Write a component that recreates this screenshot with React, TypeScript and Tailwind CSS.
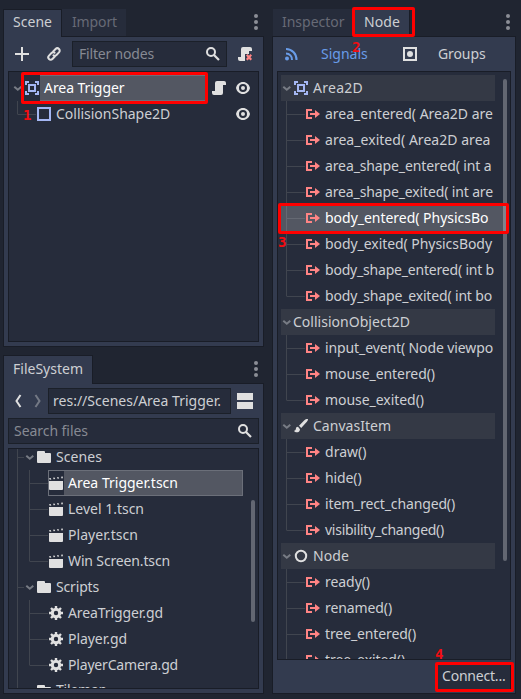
import { useLayoutEffect, useRef, useState, type ReactNode } from "react";

type IconProps = { children: ReactNode; className?: string };

function Icon({ children, className = "text-[#e0e0e0]" }: IconProps) {
  return (
    <svg width="16" height="16" viewBox="0 0 16 16" fill="currentColor" className={`block shrink-0 ${className}`}>
      {children}
    </svg>
  );
}

const AreaIcon = () => (
  <Icon className="text-[#a5b7f3]">
    <path d="M1 1v4h2V3h2V1zM11 1v2h2v2h2V1zM4 4v8h8V4zm2 2h4v4H6zM1 11v4h4v-2H3v-2zM13 11v2h-2v2h4v-4z" />
  </Icon>
);
const ShapeIcon = () => (
  <Icon className="text-[#a5b7f3]">
    <path d="M1 1v14h14V1zm2 2h10v10H3z" />
  </Icon>
);
const SignalIcon = () => (
  <Icon className="text-[#ff8484]">
    <path d="M1 3v10h6v-2H3V5h4V3zM10 4v3H5v2h5v3l5-4z" />
  </Icon>
);
const ScriptIcon = ({ detach = false }: { detach?: boolean }) => (
  <Icon>
    {detach ? (
      <>
        <path d="M6 1a2 2 0 0 0-2 2v8H1v2a2 2 0 0 0 2 2h5V8h4V5h3V3a2 2 0 0 0-2-2z" />
        <path d="M9 9.500 10.500 8 12 9.700 13.500 8 15 9.500 13.500 11.300 15 13l-1.500 1.500L12 13l-1.500 1.500L9 13l1.500-1.700z" fill="#ff8484" />
      </>
    ) : (
      <path d="M6 1a2 2 0 0 0-2 2v8H1v2a2 2 0 0 0 2 2h7a2 2 0 0 0 2-2V5h3V3a2 2 0 0 0-2-2z" />
    )}
  </Icon>
);
const EyeIcon = () => (
  <Icon>
    <path
      fillRule="evenodd"
      d="M8 2C4.500 2 1.800 4.500 1 8c.8 3.500 3.500 6 7 6s6.200-2.500 7-6c-.8-3.500-3.500-6-7-6zm0 2a4 4 0 1 1 0 8 4 4 0 0 1 0-8zm0 2a2 2 0 1 0 0 4 2 2 0 0 0 0-4z"
    />
  </Icon>
);
const SearchIcon = () => (
  <Icon>
    <circle cx="6" cy="6" r="4" fill="none" stroke="currentColor" strokeWidth="2" />
    <path d="m9 9 5 5" stroke="currentColor" strokeWidth="2.200" />
  </Icon>
);
const AddIcon = () => (
  <Icon>
    <path d="M7 1v6H1v2h6v6h2V9h6V7H9V1z" />
  </Icon>
);
const LinkIcon = () => (
  <Icon>
    <g fill="none" stroke="currentColor" strokeWidth="2" strokeLinecap="round">
      <path d="M7.200 5.500 9.600 3a2.400 2.400 0 0 1 3.400 3.400L10.500 9A2.400 2.400 0 0 1 7.500 9.300" />
      <path d="M8.800 10.500 6.400 13A2.400 2.400 0 0 1 3 9.600L5.500 7A2.400 2.400 0 0 1 8.500 6.700" />
    </g>
  </Icon>
);
const FolderIcon = () => (
  <Icon>
    <path d="M2 2a1 1 0 0 0-1 1v10a1 1 0 0 0 1 1h12a1 1 0 0 0 1-1V5a1 1 0 0 0-1-1H9V3a1 1 0 0 0-1-1z" />
  </Icon>
);
const SceneIcon = () => (
  <Icon>
    <path d="M1 6h14v8a1 1 0 0 1-1 1H2a1 1 0 0 1-1-1z" />
    <path d="m1 3.300 1.600-.3.8 1.500-1.700.3zM5 2.800l1.500-.3.7 1.500-1.500.3zM9 2.300l1.400-.3.700 1.500-1.500.3zM13 1.800l1.800-.3v1.700l-1.200.2z" />
  </Icon>
);
const GearIcon = () => (
  <Icon>
    <circle cx="8" cy="8" r="3.700" fill="none" stroke="currentColor" strokeWidth="3" />
    <g stroke="currentColor" strokeWidth="2.400">
      <path d="M8 1v3M8 12v3M1 8h3M12 8h3M3 3l2 2M11 11l2 2M13 3l-2 2M5 11l-2 2" />
    </g>
  </Icon>
);
const BrushIcon = () => (
  <Icon>
    <path d="M13.500 1c-.8.200-1.600.7-2.400 1.400L6 7.800 8.200 10l5-5.400C14.200 3.500 15.200 2 15 1.300 14.800.9 14 .9 13.500 1zM5 8.800c-1.500 0-2 .7-2.100 2-.1 1.300-.9 1.700-1.900 2.200 1.500 2 5.700 2 6-1.800z" />
  </Icon>
);
const NodeIcon = () => (
  <Icon>
    <circle cx="8" cy="8" r="5.200" fill="none" stroke="currentColor" strokeWidth="2" />
  </Icon>
);
const SignalsIcon = () => (
  <Icon className="text-[#699ce8]">
    <circle cx="3" cy="12.500" r="2" />
    <path d="M2 7.500A6 6 0 0 1 8 14M2 3a10.500 10.500 0 0 1 10.500 11" fill="none" stroke="currentColor" strokeWidth="2" />
  </Icon>
);
const GroupsIcon = () => (
  <Icon>
    <path d="M1 1v14h14V1zm2 2h10v10H3z" />
    <circle cx="8" cy="8" r="3" />
  </Icon>
);

function Chevron() {
  return (
    <svg width="12" height="12" viewBox="0 0 12 12" className="block shrink-0">
      <path d="m2.300 4.800 3.500 3 3.500-3" fill="none" stroke="#787c85" strokeWidth="2" />
    </svg>
  );
}

function Dots() {
  return (
    <svg width="6" height="18" viewBox="0 0 6 18" fill="#8b8e96" className="block shrink-0">
      <circle cx="3" cy="3" r="2" />
      <circle cx="3" cy="9" r="2" />
      <circle cx="3" cy="15" r="2" />
    </svg>
  );
}

/** Connector drawn in front of a tree item; the stem stops halfway for the last child. */
function Branch({ last = false, width = 24, color = "#40454f" }: { last?: boolean; width?: number; color?: string }) {
  return (
    <svg width={width} height="26" className="block shrink-0">
      <path d={`M5.500 0V${last ? 13 : 26}M5.500 13.500H${width}`} stroke={color} fill="none" />
    </svg>
  );
}

/** Text whose tracking is adjusted so that it spans exactly `w` pixels. */
function Fit({ w, raised = false, children }: { w: number; raised?: boolean; children: string }) {
  const ref = useRef<HTMLSpanElement>(null);
  const [tracking, setTracking] = useState(0);
  useLayoutEffect(() => {
    if (ref.current) {
      const natural = ref.current.getBoundingClientRect().width - tracking * children.length;
      setTracking((w - natural) / children.length);
    }
    // eslint-disable-next-line react-hooks/exhaustive-deps
  }, [w, children]);
  return (
    <span
      ref={ref}
      className={`block shrink-0 whitespace-pre ${raised ? "mb-[2px]" : ""}`}
      style={{ letterSpacing: `${tracking}px` }}
    >
      {children}
    </span>
  );
}

type Item = [text: string, width: number];
type Group = { label: Item; icon?: ReactNode; signals: Item[]; open?: boolean };

const groups: Group[] = [
  {
    label: ["Area2D", 50],
    icon: <AreaIcon />,
    signals: [
      ["area_entered( Area2D are", 168],
      ["area_exited( Area2D area", 165.5],
      ["area_shape_entered( int a", 166.5],
      ["area_shape_exited( int are", 168],
      ["body_entered( PhysicsBo", 163.5],
      ["body_exited( PhysicsBody", 167],
      ["body_shape_entered( int b", 169],
      ["body_shape_exited( int bo", 167],
    ],
  },
  {
    label: ["CollisionObject2D", 117],
    signals: [
      ["input_event( Node viewpo", 168],
      ["mouse_entered()", 110],
      ["mouse_exited()", 99],
    ],
  },
  {
    label: ["CanvasItem", 78],
    icon: <BrushIcon />,
    signals: [
      ["draw()", 41.5],
      ["hide()", 36.5],
      ["item_rect_changed()", 130],
      ["visibility_changed()", 119],
    ],
  },
  {
    label: ["Node", 36],
    icon: <NodeIcon />,
    open: true,
    signals: [
      ["ready()", 45],
      ["renamed()", 67],
      ["tree_entered()", 91],
      ["tree_exited()", 80],
    ],
  },
];

function SignalTree() {
  return (
    <div className="relative h-[589px] overflow-hidden border border-[#191d27] bg-[#262c3b] p-[3px]">
      {groups.map((g) => (
        <div key={g.label[0]}>
          <div className="flex h-[26px] w-[214px] items-center bg-[#343945]">
            <Chevron />
            {g.icon && <div className="mr-1">{g.icon}</div>}
            <Fit w={g.label[1]}>{g.label[0]}</Fit>
          </div>
          {g.signals.map(([text, width], i) => {
            const selected = text.startsWith("body_entered");
            return (
              <div key={text} className={`flex h-[26px] items-center ${selected ? "bg-[#535762] text-white" : ""}`}>
                <Branch last={!g.open && i === g.signals.length - 1} color={selected ? "#656973" : undefined} />
                <div className="mr-1"><SignalIcon /></div>
                <Fit w={width}>{text}</Fit>
              </div>
            );
          })}
        </div>
      ))}
      <div className="absolute left-[225px] top-[7px] h-[482px] w-1 rounded-full bg-[#636772]" />
      <div className="absolute left-[225px] top-[133px] h-[26px] w-1 bg-[#81848d]" />
      <div className="absolute left-0 top-[131px] h-[31px] w-[231px] rounded-[2px] border-[3px] border-[#fe0000]" />
    </div>
  );
}

type Folder = { label: Item; icon: ReactNode; files: Item[] };

const folders: Folder[] = [
  {
    label: ["Scenes", 46],
    icon: <SceneIcon />,
    files: [
      ["Area Trigger.tscn", 110],
      ["Level 1.tscn", 76],
      ["Player.tscn", 70],
      ["Win Screen.tscn", 102],
    ],
  },
  {
    label: ["Scripts", 43],
    icon: <GearIcon />,
    files: [
      ["AreaTrigger.gd", 95],
      ["Player.gd", 59],
      ["PlayerCamera.gd", 110],
    ],
  },
  { label: ["Tilemap", 51], icon: null, files: [] },
];

function FileTree() {
  return (
    <div className="relative h-[241px] overflow-hidden border border-[#191d27] bg-[#262c3b] pl-[3px]">
      <div className="-mt-[5px]">
        {folders.map((f) => (
          <div key={f.label[0]}>
            <div className="flex h-[26px] items-center">
              {f.files.length ? (
                <>
                  <Branch width={12} />
                  <Chevron />
                </>
              ) : (
                <svg width="24" height="26" className="block shrink-0">
                  <path d="M5.500 0v26" stroke="#40454f" />
                </svg>
              )}
              <div className="mr-1"><FolderIcon /></div>
              <Fit w={f.label[1]} raised={!f.files.length}>{f.label[0]}</Fit>
            </div>
            {f.files.map(([name, width], i) => (
              <div key={name} className="flex h-[26px] items-center">
                <div className="ml-[5px] h-[26px] w-[7px] shrink-0 border-l border-[#40454f]" />
                <Branch last={i === f.files.length - 1} />
                {name === "Area Trigger.tscn" ? (
                  <div className="flex h-[26px] w-[195px] items-center border border-[#6b6f79] text-white">
                    <div className="-ml-px">{f.icon}</div>
                    <div className="flex h-full flex-1 items-center bg-[#535762] pl-1">
                      <Fit w={width}>{name}</Fit>
                    </div>
                  </div>
                ) : (
                  <>
                    <div className="mr-1">{f.icon}</div>
                    <Fit w={width}>{name}</Fit>
                  </>
                )}
              </div>
            ))}
          </div>
        ))}
      </div>
      <div className="absolute left-[242px] top-[51px] h-[122px] w-1 rounded-full bg-[#636772]" />
    </div>
  );
}

const activeTab = "z-10 -mb-px flex items-center border border-b-0 border-[#191d27] bg-[#333b4f]";
const idleTab = "flex h-[27px] items-center bg-[#262c3b] text-[#666a76]";
const panel = "border border-[#191d27] bg-[#333b4f] px-1 pt-1";
const field = "flex h-[26px] items-center border border-[#1b2029] bg-[#262c3b]";

function Mark({ n, className }: { n: number; className: string }) {
  return (
    <span className={`absolute z-30 font-['DejaVu_Sans_Mono',monospace] text-[14px] font-bold leading-[14px] ${className}`}>
      {n}
    </span>
  );
}

export default function App() {
  return (
    <main className="relative flex h-[699px] w-[521px] overflow-hidden bg-[#202531] pl-[3px] pt-[9px] font-['Noto_Sans',sans-serif] text-[14px] leading-[20px] text-[#cdcfd3]">
      <div className="flex w-[261px] flex-col">
        <section>
          <header className="flex h-[27px] items-start">
            <div className={`${activeTab} h-7 w-[59px] pb-px pl-[9px]`}><Fit w={39} raised>Scene</Fit></div>
            <div className={`${idleTab} w-[64px] pl-[10px]`}><Fit w={45} raised>Import</Fit></div>
            <div className="ml-auto mr-[5px] mt-1"><Dots /></div>
          </header>
          <div className={`${panel} h-[311px]`}>
            <div className="flex items-center">
              <div className="ml-[6px]"><AddIcon /></div>
              <div className="ml-4"><LinkIcon /></div>
              <div className={`${field} ml-[10px] w-[155px] pl-[6px] text-[#868a93]`}>
                <Fit w={75}>Filter nodes</Fit>
                <div className="ml-auto mr-[5px]"><SearchIcon /></div>
              </div>
              <div className="ml-[10px]"><ScriptIcon detach /></div>
            </div>
            <div className="mt-1 h-[271px] border border-[#191d27] bg-[#262c3b] p-[3px]">
              <div className="relative flex h-[26px] items-center">
                <Chevron />
                <AreaIcon />
                <div className="mr-[6px] flex h-[26px] flex-1 items-center border-y border-[#6b6f79] bg-[#535762] pl-1 text-white">
                  <Fit w={80.5}>Area Trigger</Fit>
                </div>
                <ScriptIcon />
                <div className="ml-2 mr-1"><EyeIcon /></div>
                <div className="absolute -top-[3px] left-[9px] h-8 w-[187px] rounded-[2px] border-[3px] border-[#fe0000]" />
              </div>
              <div className="flex h-[26px] items-center">
                <Branch last />
                <div className="mr-1"><ShapeIcon /></div>
                <Fit w={114.3}>CollisionShape2D</Fit>
                <div className="ml-auto mr-1"><EyeIcon /></div>
              </div>
            </div>
          </div>
        </section>

        <section className="mt-2">
          <header className="flex h-[28px] items-start">
            <div className={`${activeTab} h-[29px] w-[90px] pb-px pl-[9px]`}><Fit w={70} raised>FileSystem</Fit></div>
            <div className="ml-auto mr-[5px] mt-[5px]"><Dots /></div>
          </header>
          <div className={`${panel} h-[311px]`}>
            <div className="flex items-center">
              <svg width="40" height="16" viewBox="0 0 40 16" fill="none" strokeWidth="2" className="block">
                <path d="m12.500 2-4 6 4 6" stroke="#e0e0e0" />
                <path d="m27.500 2 4 6-4 6" stroke="#747985" />
              </svg>
              <div className={`${field} w-[183px] pl-[4px]`}>
                <Fit w={168}>res://Scenes/Area Trigger.</Fit>
              </div>
              <svg width="16" height="16" className="ml-[6px] block" fill="#e0e0e0">
                <path d="M0 0h16v7H0zM0 9h16v7H0z" />
              </svg>
            </div>
            <div className={`${field} mb-1 mt-1 pl-[5px] text-[#868a93]`}>
              <Fit w={74}>Search files</Fit>
              <div className="ml-auto mr-[5px]"><SearchIcon /></div>
            </div>
            <FileTree />
          </div>
        </section>
      </div>

      <section className="ml-2 w-[244px]">
        <header className="relative flex h-[27px] items-start">
          <div className={`${idleTab} ml-px w-[80px] pl-[9px]`}><Fit w={62.5} raised>Inspector</Fit></div>
          <div className={`${activeTab} h-7 w-[57px] pb-px pl-[10px]`}><Fit w={36} raised>Node</Fit></div>
          <div className="ml-auto mr-[5px] mt-1"><Dots /></div>
          <div className="absolute -top-[2px] left-20 z-20 h-[30px] w-[63px] rounded-[2px] border-[3px] border-[#fe0000]" />
        </header>
        <div className={`${panel} h-[658px] w-[244px]`}>
          <div className="mb-1 flex h-[26px] items-center">
            <div className="ml-[7px]"><SignalsIcon /></div>
            <div className="ml-[21px] w-[45px] text-[#699ce8]"><Fit w={45}>Signals</Fit></div>
            <div className="ml-[36px] mr-[20px]"><GroupsIcon /></div>
            <Fit w={47.5}>Groups</Fit>
          </div>
          <SignalTree />
          <div className="relative ml-auto mt-1 flex h-[26px] w-[74px] items-center border border-[#191d27] bg-[#262c3b] pl-[4px]">
            <Fit w={63.5} raised>Connect...</Fit>
            <div className="absolute -left-[3px] -top-[3px] h-[30px] w-[79px] rounded-[2px] border-[3px] border-[#fe0000]" />
          </div>
        </div>
      </section>

      <Mark n={1} className="left-[23px] top-[108px] text-[#f20d12]" />
      <Mark n={2} className="left-[352px] top-[40px] text-[#f20d12]" />
      <Mark n={3} className="left-[278px] top-[235px] text-[#f20d12]" />
      <Mark n={4} className="left-[435px] top-[647px] text-[#f20d12]" />
    </main>
  );
}
